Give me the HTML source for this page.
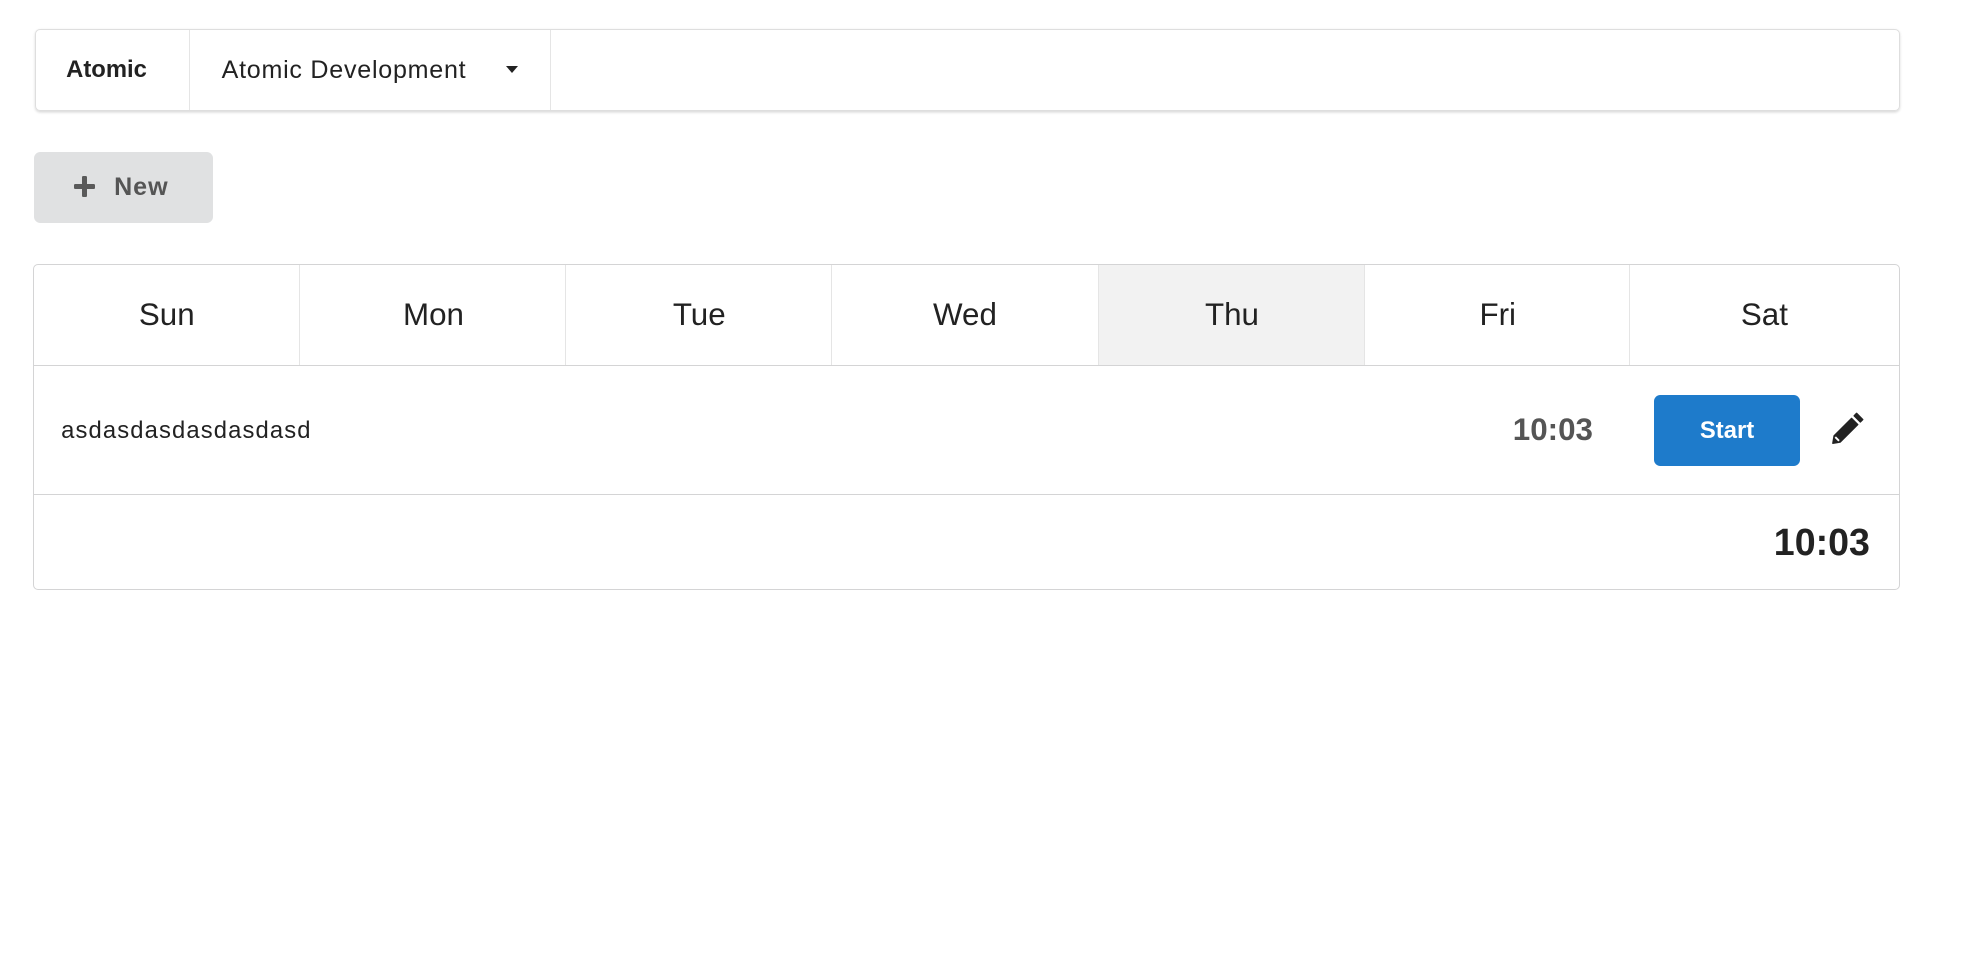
<!DOCTYPE html>
<html><head><meta charset="utf-8"><style>
html,body{margin:0;padding:0;background:#fff;width:1966px;height:972px;overflow:hidden}
#w{zoom:1.2535;position:relative;width:1569px;height:776px;font-family:"Liberation Sans",sans-serif;color:#222}
.a{position:absolute;white-space:nowrap}
.menu{left:28px;top:23px;width:1486px;height:64px;border:1px solid #dedede;border-radius:4px;box-shadow:0 1px 2px rgba(0,0,0,.15)}
.vd{position:absolute;top:0;bottom:0;width:1px;background:#e5e5e5}
.btn{left:27px;top:121px;width:143px;height:57px;background:#e0e1e2;border-radius:5px}
.tbl{left:26px;top:211px;width:1488px;height:258px;border:1px solid #d4d4d5;border-radius:4px}
.hd{position:absolute;top:0;height:79px;width:212.5px;text-align:center;line-height:79px;font-size:25px}
</style></head><body><div id="w">
<div class="a menu">
 <div class="a" style="left:24px;top:0;line-height:64px;font-size:19px;font-weight:bold">Atomic</div>
 <div class="vd" style="left:122px"></div>
 <div class="a" style="left:148px;top:0;line-height:64px;font-size:20px;letter-spacing:0.6px">Atomic Development</div>
 <div class="a" style="left:375px;top:29px;width:0;height:0;border-left:5px solid transparent;border-right:5px solid transparent;border-top:6px solid #222"></div>
 <div class="vd" style="left:410px"></div>
</div>
<div class="a btn">
 <div class="a" style="left:32px;top:26px;width:17px;height:4px;background:#5a5a5a;border-radius:1px"></div>
 <div class="a" style="left:38.5px;top:19.5px;width:4px;height:17px;background:#5a5a5a;border-radius:1px"></div>
 <div class="a" style="left:64px;top:0;line-height:57px;font-size:20px;font-weight:bold;color:#555;letter-spacing:0.8px">New</div>
</div>
<div class="a tbl">
 <div class="hd" style="left:0">Sun</div>
 <div class="hd" style="left:212px;border-left:1px solid #e5e5e5">Mon</div>
 <div class="hd" style="left:424px;border-left:1px solid #e5e5e5">Tue</div>
 <div class="hd" style="left:636px;border-left:1px solid #e5e5e5">Wed</div>
 <div class="hd" style="left:849px;border-left:1px solid #e5e5e5;background:#f2f2f2">Thu</div>
 <div class="hd" style="left:1061px;border-left:1px solid #e5e5e5">Fri</div>
 <div class="hd" style="left:1273px;border-left:1px solid #e5e5e5;width:214px">Sat</div>
 <div class="a" style="left:0;right:0;top:79px;height:1px;background:#d4d4d5"></div>
 <div class="a" style="left:22px;top:81px;line-height:102px;font-size:19px;letter-spacing:0.9px">asdasdasdasdasdasd</div>
 <div class="a" style="right:244px;top:80px;line-height:102px;font-size:25px;font-weight:bold;color:#555">10:03</div>
 <div class="a" style="left:1293px;top:103px;width:116px;height:57px;background:#1e7bcb;border-radius:5px;color:#fff;font-weight:bold;font-size:19px;text-align:center;line-height:57px">Start</div>
 <svg class="a" style="left:1432px;top:117px" width="28" height="28" viewBox="0 0 28 28"><path d="M3 25 L4 19 L18 5 L23 10 L9 24 Z M20 3 L22 1 L27 6 L25 8 Z" fill="#222" stroke="#222" stroke-width="1" stroke-linejoin="round"/><path d="M5 20 L8 23" stroke="#fff" stroke-width="1.5"/></svg>
 <div class="a" style="left:0;right:0;top:182px;height:1px;background:#d4d4d5"></div>
 <div class="a" style="right:23px;top:183px;line-height:76px;font-size:30px;font-weight:bold;color:#222">10:03</div>
</div>
</div></body></html>
